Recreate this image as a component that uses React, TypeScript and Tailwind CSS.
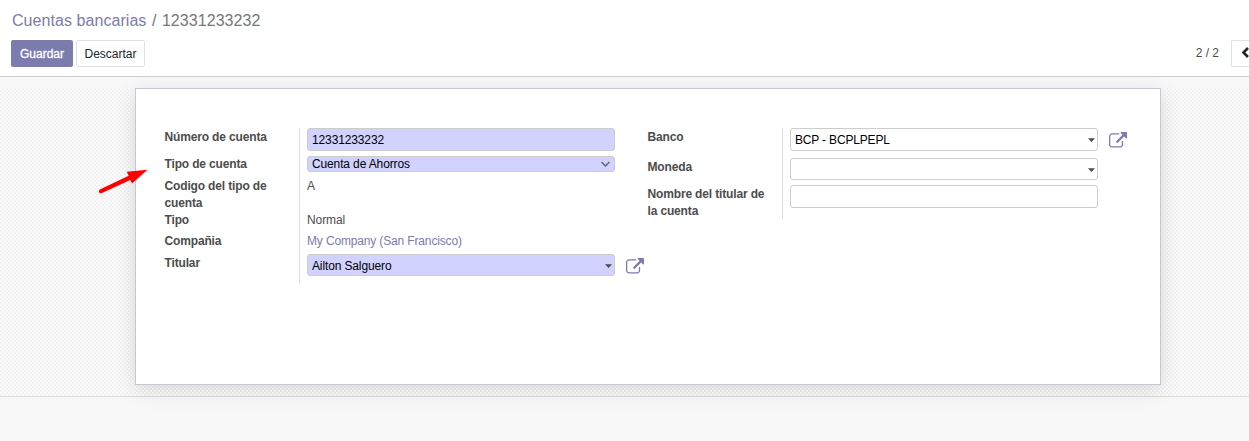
import React from 'react';

function ExternalLink() {
  return (
    <svg className="block h-[18px] w-[18px] fill-[#7c7bad]" viewBox="0 0 1792 1792">
      <path d="M1408 928v320q0 119-84.500 203.500t-203.500 84.500h-832q-119 0-203.500-84.500t-84.500-203.500v-832q0-119 84.500-203.500t203.500-84.500h704q14 0 23 9t9 23v64q0 14-9 23t-23 9h-704q-66 0-113 47t-47 113v832q0 66 47 113t113 47h832q66 0 113-47t47-113v-320q0-14 9-23t23-9h64q14 0 23 9t9 23zm384-864v512q0 26-19 45t-45 19-45-19l-176-176-652 652q-10 10-23 10t-23-10l-114-114q-10-10-10-23t10-23l652-652-176-176q-19-19-19-45t19-45 45-19h512q26 0 45 19t19 45z" />
    </svg>
  );
}

function Caret() {
  return (
    <svg className="mr-[2px] block h-1 w-[7px] shrink-0 fill-[#4c4c4c]" viewBox="0 0 7 4">
      <path d="M0 .3h7L3.500 4z" />
    </svg>
  );
}

function Row({ label, height, children }: { label: React.ReactNode; height: string; children?: React.ReactNode }) {
  return (
    <div className={`flex ${height}`}>
      <div className="-ml-[0.500px] w-[134.500px] shrink-0 pt-px font-bold tracking-[-0.150px]">{label}</div>
      <div className="flex grow items-start border-l border-[#dddddd] pl-[7px]">{children}</div>
    </div>
  );
}

const field = 'flex w-[308px] items-center justify-between rounded-[3px] border border-[#cccccc] text-black';

export default function App() {
  return (
    <div className="h-[441px] w-[1249px] overflow-hidden bg-[#f8f8f8] font-['Liberation_Sans',Arial,sans-serif] text-[12px] leading-[17px] text-[#4c4c4c]">
      <header className="relative z-10 h-[77px] border-b border-[#cccccc] bg-white">
        <div className="flex h-10 pl-3 pt-[11px] text-[16px] leading-5">
          <span className="tracking-[0.060px] text-[#7c7bad]">Cuentas bancarias</span>
          <span className="px-[5.5px] text-[#777777]">/</span>
          <span className="tracking-[0.060px] text-[#777777]">12331233232</span>
        </div>
        <div className="flex pl-[11px]">
          <button className="h-[27px] w-[62px] rounded-[2px] bg-[#7c7bad] pt-px text-white [-webkit-text-stroke:0.3px_white]">Guardar</button>
          <button className="ml-[3px] h-[27px] w-[69px] rounded-[2px] border border-[#dee2e6] pt-px text-[#212529]">Descartar</button>
          <span className="ml-auto pt-1 leading-[18px]">2 / 2</span>
          <button className="ml-3 flex h-[27px] w-[18px] items-center rounded-l-[2px] border border-r-0 border-[#dee2e6] pb-[2px] pl-[9px]">
            <svg className="h-[11px] w-2 shrink-0" viewBox="0 0 8 11" fill="none" stroke="#212529" strokeWidth="2.600"><path d="M7 1L2.500 5.500L7 10" /></svg>
          </button>
        </div>
      </header>
      <main className="relative mt-[11px] h-[309px] border-b border-[#dddddd] bg-[repeating-conic-gradient(#f2f2f2_0_25%,#fcfcfc_0_50%)] bg-[length:4px_4px] pl-[135px]">
        <section className="flex h-[297px] w-[1026px] border border-[#c8c8d3] bg-white pl-[29px] pt-[39px] shadow-[0_5px_20px_0_rgba(0,0,0,0.13)]">
          <div className="w-[483px]">
            <Row label="Número de cuenta" height="h-[27px]">
              <div className={`${field} h-[23px] bg-[#d2d2ff] pl-1 pt-px`}><span className="tracking-[-0.130px]">12331233232</span></div>
            </Row>
            <Row label="Tipo de cuenta" height="h-[22px]">
              <div className={`${field} mt-px h-4 bg-[#d2d2ff] pl-1`}>
                <span className="tracking-[-0.130px]">Cuenta de Ahorros</span>
                <svg className="mr-1 h-[6px] w-[9px]" viewBox="0 0 9 6" fill="none" stroke="#686878" strokeWidth="1.600"><path d="M.6 1L4.500 5L8.400 1" /></svg>
              </div>
            </Row>
            <Row label={<>Codigo del tipo de<br />cuenta</>} height="h-[34px]"><span className="pt-px">A</span></Row>
            <Row label="Tipo" height="h-[21px]"><span className="pt-px tracking-[-0.100px]">Normal</span></Row>
            <Row label="Compañia" height="h-[22px]"><span className="pt-px tracking-[-0.150px] text-[#7c7bad]">My Company (San Francisco)</span></Row>
            <Row label="Titular" height="h-[29px]">
              <div className={`${field} h-[22px] bg-[#d2d2ff] pl-1 pt-0.5`}><span className="tracking-[-0.130px]">Ailton Salguero</span><Caret /></div>
              <div className="ml-[10.500px] mt-1"><ExternalLink /></div>
            </Row>
          </div>
          <div className="w-[500px]">
            <Row label="Banco" height="h-[30px]">
              <div className={`${field} h-[23px] pl-1 pt-px`}><span className="tracking-[-0.170px]">BCP - BCPLPEPL</span><Caret /></div>
              <div className="ml-[10.500px] mt-1"><ExternalLink /></div>
            </Row>
            <Row label="Moneda" height="h-[27px]"><div className={`${field} h-[22px] pt-px`}><span /><Caret /></div></Row>
            <Row label={<>Nombre del titular de<br />la cuenta</>} height="h-[34px]"><div className={`${field} h-[23px]`} /></Row>
          </div>
        </section>
        <svg className="absolute left-[98px] top-[80px] h-7 w-[50px]" viewBox="0 0 50 28" fill="#ff0000">
          <path d="M28.800 3.800L49.500 1.700L34 15.500L32.300 12L3.400 25.200Q1.500 25.600 1 24Q.5 22.700 1.800 21.600L30.700 7.800Z" />
        </svg>
      </main>
    </div>
  );
}
